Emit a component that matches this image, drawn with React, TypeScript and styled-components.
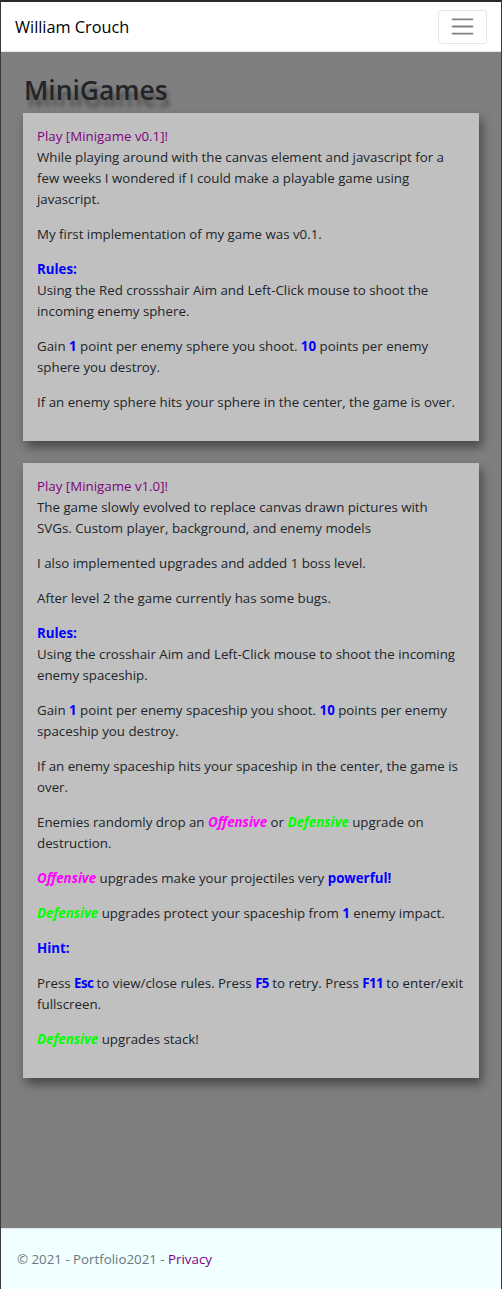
import React from "react";
import styled, { createGlobalStyle } from "styled-components";

const GlobalStyle = createGlobalStyle`
  html, body { margin: 0; padding: 0; }
  body {
    font-family: "Open Sans", "Noto Sans", sans-serif;
    font-size: 13.3px;
    line-height: 21px;
    color: #212529;
    background: #7f7f7f;
  }
  * { box-sizing: border-box; }
`;

const Frame = styled.div`
  min-height: 100vh;
  display: flex;
  flex-direction: column;
  border-top: 2px solid #2b2b2b;
  border-left: 1px solid #3a3a3a;
  border-right: 1px solid #3a3a3a;
  background: #7f7f7f;
`;

const NavBar = styled.header`
  display: flex;
  align-items: center;
  justify-content: space-between;
  background: #ffffff;
  padding: 7px 14px;
  border-bottom: 1px solid #e5e5e5;
  height: 50px;
`;

const Brand = styled.a`
  font-size: 16.3px;
  line-height: 1.5;
  padding-top: 1px;
  color: #000000;
  text-decoration: none;
`;

const Toggler = styled.button`
  width: 49px;
  height: 34px;
  padding: 0;
  display: flex;
  align-items: center;
  justify-content: center;
  background: transparent;
  border: 1px solid rgba(0, 0, 0, 0.1);
  border-radius: 3.5px;
`;

const Main = styled.main`
  flex: 1;
  padding: 21.6px 22px 40px;
`;

const Title = styled.h2`
  margin: 0 0 7.2px 1px;
  font-size: 26.4px;
  line-height: 32px;
  font-weight: 600;
  color: #212529;
  text-shadow: 3px 7px 4px rgba(0, 0, 0, 0.4);
`;

const Card = styled.section`
  background: #c0c0c0;
  padding: 13.5px 15px 13.5px 14px;
  margin-bottom: 22px;
  box-shadow: 3px 6px 10px rgba(0, 0, 0, 0.45);
`;

const P = styled.p`
  margin: 0 0 14px;
`;

const PlayLink = styled.a`
  color: #800080;
  text-decoration: none;
`;

const Blue = styled.b`
  color: #0000ff;
  font-weight: 700;
`;

const Key = styled(Blue)`
  letter-spacing: -0.6px;
`;

const Upgrade = styled.b<{ $kind: "off" | "def" }>`
  color: ${(p) => (p.$kind === "off" ? "#ff00ff" : "#00ff00")};
  font-style: italic;
  font-weight: 700;
`;

const Footer = styled.footer`
  background: #f0ffff;
  border-top: 1px solid #e4e7ea;
  height: 61px;
  line-height: 60px;
  padding-left: 16px;
  color: #6c757d;
  white-space: nowrap;
`;

const FooterLink = styled.a`
  color: #800080;
  text-decoration: none;
`;

const TogglerIcon = () => (
  <svg width="27" height="27" viewBox="0 0 30 30" aria-hidden="true">
    <path
      d="M4 7h22M4 15h22M4 23h22"
      stroke="rgba(0,0,0,0.5)"
      strokeWidth="2"
      strokeLinecap="round"
      strokeMiterlimit="10"
    />
  </svg>
);

export default function App() {
  return (
    <Frame>
      <GlobalStyle />
      <NavBar>
        <Brand href="#">William Crouch</Brand>
        <Toggler aria-label="Toggle navigation">
          <TogglerIcon />
        </Toggler>
      </NavBar>
      <Main>
        <Title>MiniGames</Title>
        <Card>
          <P>
            <PlayLink href="#">Play [Minigame v0.1]!</PlayLink>
            <br />
            While playing around with the canvas element and javascript for a few weeks I wondered if I could make a
            playable game using javascript.
          </P>
          <P>My first implementation of my game was v0.1.</P>
          <P>
            <Blue>Rules:</Blue>
            <br />
            Using the Red crossshair Aim and Left-Click mouse to shoot the incoming enemy sphere.
          </P>
          <P>
            Gain <Blue>1</Blue> point per enemy sphere you shoot. <Blue>10</Blue> points per enemy sphere you destroy.
          </P>
          <P>If an enemy sphere hits your sphere in the center, the game is over.</P>
        </Card>
        <Card>
          <P>
            <PlayLink href="#">Play [Minigame v1.0]!</PlayLink>
            <br />
            The game slowly evolved to replace canvas drawn pictures with SVGs. Custom player, background, and enemy
            models
          </P>
          <P>I also implemented upgrades and added 1 boss level.</P>
          <P>After level 2 the game currently has some bugs.</P>
          <P>
            <Blue>Rules:</Blue>
            <br />
            Using the crosshair Aim and Left-Click mouse to shoot the incoming enemy spaceship.
          </P>
          <P>
            Gain <Blue>1</Blue> point per enemy spaceship you shoot. <Blue>10</Blue> points per enemy spaceship you
            destroy.
          </P>
          <P>If an enemy spaceship hits your spaceship in the center, the game is over.</P>
          <P>
            Enemies randomly drop an <Upgrade $kind="off">Offensive</Upgrade> or <Upgrade $kind="def">Defensive</Upgrade>{" "}
            upgrade on destruction.
          </P>
          <P>
            <Upgrade $kind="off">Offensive</Upgrade> upgrades make your projectiles very <Blue>powerful!</Blue>
          </P>
          <P>
            <Upgrade $kind="def">Defensive</Upgrade> upgrades protect your spaceship from <Blue>1</Blue> enemy impact.
          </P>
          <P>
            <Blue>Hint:</Blue>
          </P>
          <P>
            Press <Key>Esc</Key> to view/close rules. Press <Key>F5</Key> to retry. Press <Key>F11</Key> to enter/exit
            fullscreen.
          </P>
          <P>
            <Upgrade $kind="def">Defensive</Upgrade> upgrades stack!
          </P>
        </Card>
      </Main>
      <Footer>
        © 2021 - Portfolio2021 - <FooterLink href="#">Privacy</FooterLink>
      </Footer>
    </Frame>
  );
}
